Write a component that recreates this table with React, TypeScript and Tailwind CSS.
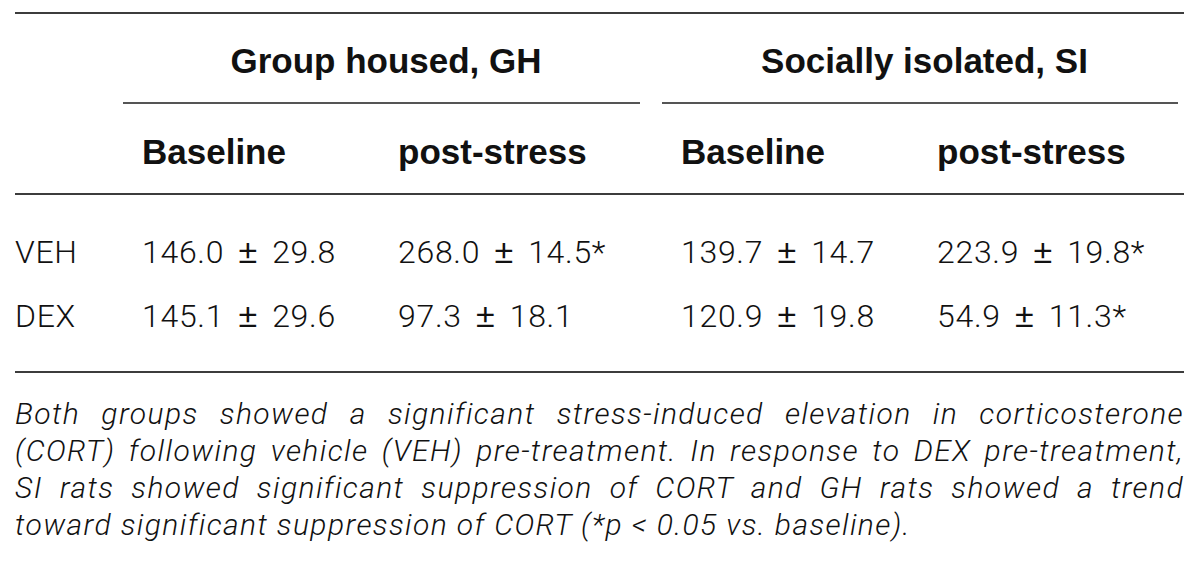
const groups = [
  { name: "Group housed, GH", width: "w-[517px]" },
  { name: "Socially isolated, SI", width: "w-[516px]" },
];

const subHeaders = ["Baseline", "post-stress", "Baseline", "post-stress"];

const rows = [
  { label: "VEH", values: ["146.0 ± 29.8", "268.0 ± 14.5*", "139.7 ± 14.7", "223.9 ± 19.8*"] },
  { label: "DEX", values: ["145.1 ± 29.6", "97.3 ± 18.1", "120.9 ± 19.8", "54.9 ± 11.3*"] },
];

const caption = [
  "Both groups showed a significant stress-induced elevation in corticosterone",
  "(CORT) following vehicle (VEH) pre-treatment. In response to DEX pre-treatment,",
  "SI rats showed significant suppression of CORT and GH rats showed a trend",
  "toward significant suppression of CORT (*p < 0.05 vs. baseline).",
];

const gridCols = "grid grid-cols-[127px_256px_283px_256px_1fr]";

function Value({ text }: { text: string }) {
  const [mean, sem] = text.split(" ± ");
  return (
    <div className="whitespace-nowrap">
      <span>{mean}</span>
      <span className="inline-block w-[48px] text-center font-['Liberation_Sans',Arial,sans-serif] font-normal text-[34px] leading-[40px]">
        ±
      </span>
      <span>{sem}</span>
    </div>
  );
}

export default function App() {
  return (
    <div className="w-[1200px] h-[570px] bg-white pl-[15px] pr-[16px] pt-[12px] text-[#111]">
      <div className="h-[2px] bg-[#3c3c3c]" />

      {/* group headers */}
      <div className="mt-[28px] flex font-['Liberation_Sans',Arial,sans-serif] font-bold text-[35px] leading-[38px]">
        <div className="w-[108px]" />
        {groups.map((g, i) => (
          <div key={g.name} className={`${g.width} ${i > 0 ? "ml-[22px]" : ""}`}>
            <div className="text-center pl-[9px]">{g.name}</div>
            <div className="mt-[22px] h-[2px] bg-[#555]" />
          </div>
        ))}
      </div>

      {/* sub headers */}
      <div className={`${gridCols} mt-[29px] font-['Liberation_Sans',Arial,sans-serif] font-bold text-[35px] leading-[38px]`}>
        <div />
        {subHeaders.map((h, i) => (
          <div key={i}>{h}</div>
        ))}
      </div>
      <div className="mt-[22px] h-[2px] bg-[#3c3c3c]" />

      {/* data rows */}
      <div className="mt-[25px] font-['Roboto',Arial,sans-serif] font-light text-[32px] leading-[64px] tracking-[0.7px]">
        {rows.map((r) => (
          <div key={r.label} className={gridCols}>
            <div>{r.label}</div>
            {r.values.map((v, i) => (
              <Value key={i} text={v} />
            ))}
          </div>
        ))}
      </div>
      <div className="mt-[23px] h-[2px] bg-[#3c3c3c]" />

      {/* caption */}
      <div className="mt-[22px] font-['Roboto',Arial,sans-serif] font-light italic text-[30px] leading-[37px] tracking-[1.4px]">
        {caption.map((line, i) => (
          <p
            key={i}
            className={i < caption.length - 1 ? "text-justify [text-align-last:justify]" : "text-left"}
          >
            {line}
          </p>
        ))}
      </div>
    </div>
  );
}
